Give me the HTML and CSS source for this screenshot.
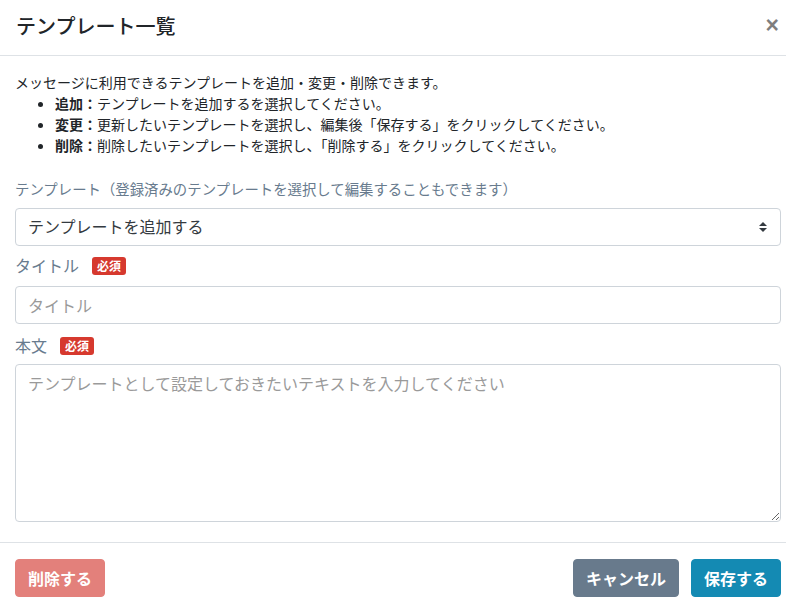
FILE: index.html
```html
<!DOCTYPE html>
<html lang="ja">
<head>
<meta charset="utf-8">
<title>テンプレート一覧</title>
<link rel="stylesheet" href="styles.css">
</head>
<body>
<div class="modal">
  <div class="modal-header">
    <h5 class="modal-title">テンプレート一覧</h5>
    <button class="close" type="button" aria-label="Close">×</button>
  </div>
  <div class="modal-body">
    <div class="desc">
      <p>メッセージに利用できるテンプレートを追加・変更・削除できます。</p>
      <ul>
        <li><b>追加：</b>テンプレートを追加するを選択してください。</li>
        <li><b>変更：</b>更新したいテンプレートを選択し、編集後「保存する」をクリックしてください。</li>
        <li><b>削除：</b>削除したいテンプレートを選択し、「削除する」をクリックしてください。</li>
      </ul>
    </div>
    <label class="label label-small">テンプレート（登録済みのテンプレートを選択して編集することもできます）</label>
    <div class="select-wrap">
      <select class="control select">
        <option>テンプレートを追加する</option>
      </select>
      <svg class="select-icon" width="8" height="10" viewBox="0 0 8 10"><path d="M4 0L8 4H0z M4 10L0 6H8z" fill="#343a40"/></svg>
    </div>
    <label class="label label-big label-title">タイトル<span class="badge">必須</span></label>
    <input class="control" type="text" placeholder="タイトル">
    <label class="label label-big label-body">本文<span class="badge">必須</span></label>
    <textarea class="control textarea" placeholder="テンプレートとして設定しておきたいテキストを入力してください"></textarea>
  </div>
  <div class="modal-footer">
    <button class="btn btn-danger" type="button">削除する</button>
    <div class="right">
      <button class="btn btn-secondary" type="button">キャンセル</button>
      <button class="btn btn-primary" type="button">保存する</button>
    </div>
  </div>
</div>
</body>
</html>
```

FILE: styles.css
```css
* { box-sizing: border-box; }
html, body {
  margin: 0;
  padding: 0;
  background: #fff;
}
body {
  font-family: "Noto Sans CJK JP", "Noto Sans", sans-serif;
  color: #212529;
  font-size: 16px;
  line-height: 1.5;
  overflow: hidden;
}
.modal {
  width: 786px;
  display: flex;
  flex-direction: column;
}
.modal-header {
  display: flex;
  align-items: center;
  justify-content: space-between;
  height: 56px;
  padding: 0 3px 0 16px;
  border-bottom: 1px solid #dee2e6;
}
.modal-title {
  margin: 0;
  font-size: 20px;
  font-weight: 500;
  line-height: 1.2;
  color: #212529;
  padding-bottom: 4px;
}
.close {
  background: none;
  border: 0;
  padding: 0 4px 4px;
  margin: 0;
  font-family: "Liberation Sans", sans-serif;
  font-size: 23px;
  font-weight: 700;
  line-height: 1;
  color: #000;
  opacity: 0.5;
  cursor: pointer;
}
.modal-body {
  display: flex;
  flex-direction: column;
  padding: 16px 5px 20px 15px;
}
.desc {
  font-size: 14px;
  line-height: 21px;
}
.desc p { margin: 0; }
.desc ul {
  margin: 0;
  padding-left: 40px;
}
.desc b { font-weight: 700; }
.label {
  display: flex;
  align-items: center;
  color: #687b8e;
  line-height: 21px;
}
.label-small {
  font-size: 14.4px;
  margin-top: 22px;
  margin-bottom: 9px;
}
.label-big {
  font-size: 16px;
  margin-top: 9px;
  margin-bottom: 9px;
}
.label-title { margin-bottom: 10px; }
.label-body { margin-top: 11px; margin-bottom: 8px; }
.badge {
  display: inline-block;
  margin-left: 13px;
  background: #d6392e;
  color: #fff;
  font-size: 12px;
  font-weight: 700;
  line-height: 18px;
  padding: 0 5px;
  border-radius: 3px;
}
.control {
  display: block;
  width: 100%;
  height: 38px;
  padding: 6px 12px;
  font-family: inherit;
  font-size: 16px;
  line-height: 1.5;
  color: #495057;
  background: #fff;
  border: 1px solid #ced4da;
  border-radius: 4px;
  margin: 0;
}
.control::placeholder { color: #9a9a9a; }
.select-wrap { position: relative; }
.select {
  appearance: none;
  -webkit-appearance: none;
  color: #343a40;
  padding: 4px 12px 6px;
}
.select-icon {
  position: absolute;
  right: 14px;
  top: 14px;
}
.textarea {
  height: 158px;
  resize: vertical;
}
.modal-footer {
  display: flex;
  justify-content: space-between;
  align-items: center;
  padding: 16px 5px 16px 15px;
  border-top: 1px solid #dee2e6;
}
.right {
  display: flex;
  gap: 12px;
}
.btn {
  font-family: inherit;
  font-size: 16px;
  font-weight: 700;
  line-height: 24px;
  height: 38px;
  padding: 6px 12px;
  border-radius: 4px;
  border: 1px solid transparent;
  color: #fff;
  cursor: pointer;
}
.btn-danger { background: #e3807b; border-color: #e3807b; }
.btn-secondary { background: #687a8c; border-color: #687a8c; }
.btn-primary { background: #148ab3; border-color: #148ab3; }
```
